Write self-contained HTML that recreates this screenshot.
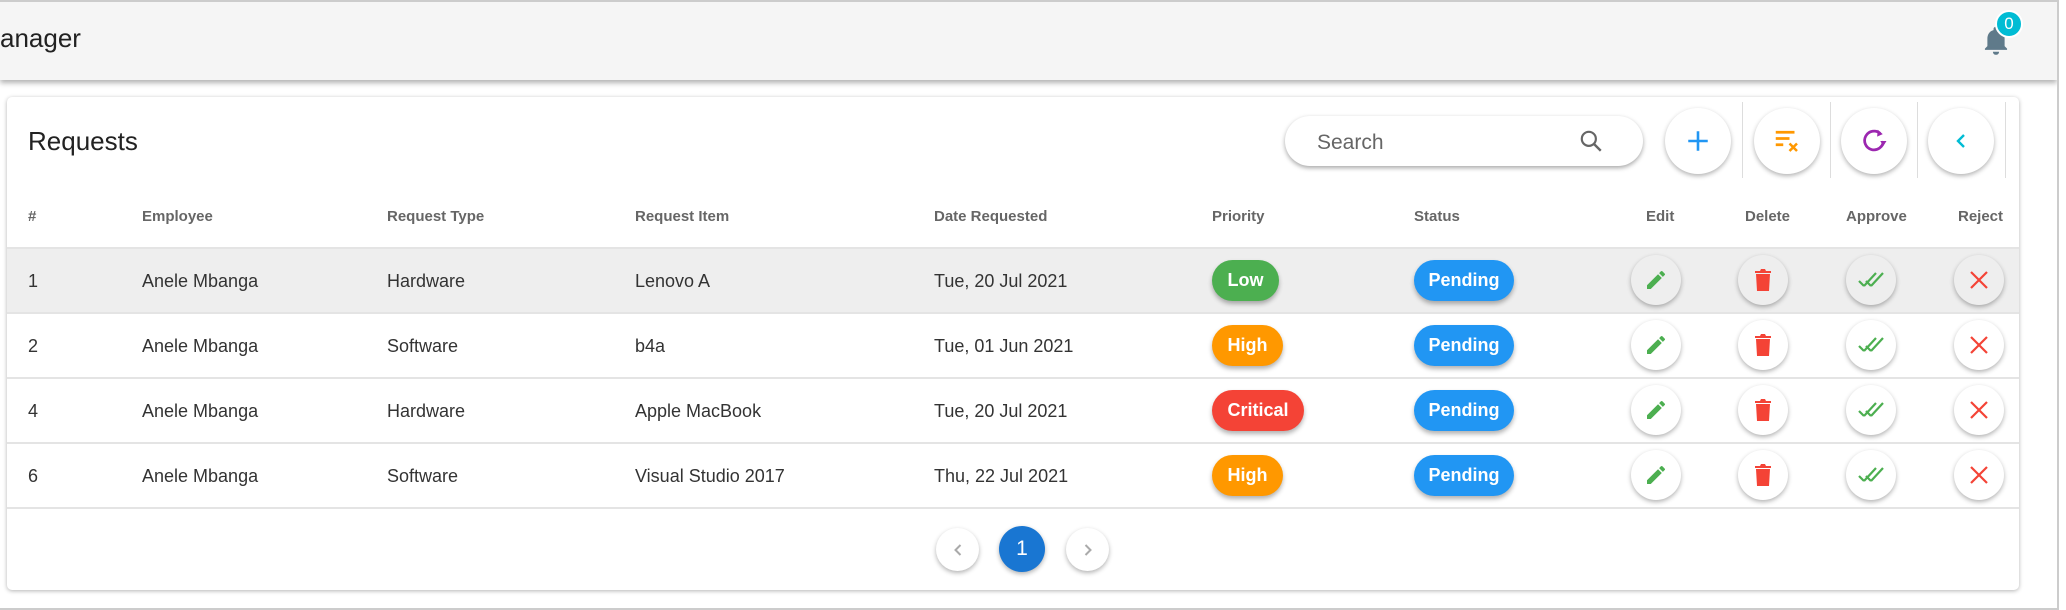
<!DOCTYPE html>
<html><head><meta charset="utf-8"><style>
*{box-sizing:border-box;margin:0;padding:0}
body{width:2066px;height:610px;overflow:hidden;background:#fff;font-family:"Liberation Sans",sans-serif;position:relative;color:#333}
.abs{position:absolute}
.hdr{left:0;top:0;width:2057px;height:80px;background:#f5f5f5;border-top:2px solid #ccc;box-shadow:0 3px 5px rgba(0,0,0,.3)}
.card{left:7px;top:97px;width:2012px;height:493px;background:#fff;border-radius:5px;box-shadow:0 1px 4px rgba(0,0,0,.3)}
.th{top:208px;font-size:15px;font-weight:bold;color:#666}
.td{font-size:18px;color:#333}
.line{left:7px;width:2012px;height:2px;background:#e4e4e4}
.pill{height:41px;border-radius:21px;color:#fff;font-size:18px;font-weight:bold;display:flex;align-items:center;justify-content:center;box-shadow:0 3px 5px rgba(0,0,0,.3)}
.circ{border-radius:50%;background:#fff;box-shadow:0 2px 5px rgba(0,0,0,.3);display:flex;align-items:center;justify-content:center}
.ac{width:50px;height:50px}
.tb{width:66px;height:66px;top:108px}
.div{width:1px;background:#ddd;top:102px;height:76px}
</style></head><body>
<div class="abs hdr"></div>
<div class="abs" style="left:0;top:23px;font-size:26px;color:#222">anager</div>
<svg class="abs" style="left:1981px;top:24px" width="30" height="32" viewBox="0 0 24 26"><path d="M12 25c1.4 0 2.5-1 2.5-2.5h-5C9.5 24 10.6 25 12 25zM19 18v-6c0-3.4-1.8-6.2-5-7V4c0-1-.9-1.8-2-1.8S10 3 10 4v1c-3.2.8-5 3.6-5 7v6l-2 2v1h18v-1z" fill="#5f7a8a"/></svg>
<div class="abs" style="left:1995px;top:10px;width:28px;height:28px;border-radius:50%;background:#00bcd4;border:2px solid #fff;color:#fff;font-size:17px;display:flex;align-items:center;justify-content:center">0</div>
<div class="abs" style="left:2057px;top:0;width:9px;height:610px;background:#fff;border-left:2px solid #ccc"></div>
<div class="abs" style="left:0;top:608px;width:2057px;height:2px;background:#ccc"></div>

<div class="abs card"></div>
<div class="abs" style="left:28px;top:126px;font-size:26px;color:#222">Requests</div>
<div class="abs" style="left:1285px;top:116px;width:358px;height:50px;border-radius:25px;background:#fff;box-shadow:0 2px 5px rgba(0,0,0,.35)"></div>
<div class="abs" style="left:1317px;top:131px;font-size:21px;color:#666">Search</div>
<svg class="abs" style="left:1578px;top:128px" width="26" height="26" viewBox="0 0 24 24"><circle cx="10" cy="10" r="6.5" fill="none" stroke="#666" stroke-width="2"/><path d="M15 15l6 6" stroke="#666" stroke-width="2.2"/></svg>
<div class="abs div" style="left:1742px"></div><div class="abs div" style="left:1830px"></div><div class="abs div" style="left:1917px"></div><div class="abs div" style="left:2005px"></div>
<div class="abs circ tb" style="left:1665px"><svg width="26" height="26" viewBox="0 0 24 24"><path d="M12 3v18M3 12h18" stroke="#2196f3" stroke-width="2.4"/></svg></div>
<div class="abs circ tb" style="left:1754px"><svg width="30" height="30" viewBox="0 0 24 24"><path d="M3 5h15M3 10h11M3 15h6" stroke="#ff9800" stroke-width="2.2"/><path d="M14 14l6 6M20 14l-6 6" stroke="#ff9800" stroke-width="2"/></svg></div>
<div class="abs circ tb" style="left:1841px"><svg width="30" height="30" viewBox="0 0 24 24"><path d="M17 6A7.5 7.5 0 1 0 19.5 12" fill="none" stroke="#9c27b0" stroke-width="2.2"/><path d="M15 3l4 3.5-4.5 2z M17 12l5 0-2.5 4z" fill="#9c27b0"/></svg></div>
<div class="abs circ tb" style="left:1928px"><svg width="24" height="24" viewBox="0 0 24 24"><path d="M15 6l-6 6 6 6" fill="none" stroke="#00bcd4" stroke-width="2.4"/></svg></div>

<div class="abs th" style="left:28px">#</div>
<div class="abs th" style="left:142px">Employee</div>
<div class="abs th" style="left:387px">Request Type</div>
<div class="abs th" style="left:635px">Request Item</div>
<div class="abs th" style="left:934px">Date Requested</div>
<div class="abs th" style="left:1212px">Priority</div>
<div class="abs th" style="left:1414px">Status</div>
<div class="abs th" style="left:1646px">Edit</div>
<div class="abs th" style="left:1745px">Delete</div>
<div class="abs th" style="left:1846px">Approve</div>
<div class="abs th" style="left:1958px">Reject</div>

<div class="abs" style="left:7px;top:248px;width:2012px;height:64px;background:#eee"></div>
<div class="abs line" style="top:247px"></div>
<div class="abs line" style="top:312px"></div>
<div class="abs line" style="top:377px"></div>
<div class="abs line" style="top:442px"></div>
<div class="abs line" style="top:507px"></div>

<div id="rows"></div>
<script>
var rows=[["1","Hardware","Lenovo A","Tue, 20 Jul 2021","Low","#4caf50",67],["2","Software","b4a","Tue, 01 Jun 2021","High","#ff9800",71],["4","Hardware","Apple MacBook","Tue, 20 Jul 2021","Critical","#f44336",92],["6","Software","Visual Studio 2017","Thu, 22 Jul 2021","High","#ff9800",71]];
var h="";
var pen='<svg width="24" height="24" viewBox="0 0 24 24"><path d="M3 17.25V21h3.75L17.8 9.94l-3.75-3.75zM20.7 7.04a1 1 0 0 0 0-1.41l-2.34-2.34a1 1 0 0 0-1.41 0l-1.83 1.83 3.75 3.75z" fill="#4caf50"/></svg>';
var del='<svg width="24" height="26" viewBox="0 0 24 26"><path d="M5 7h14l-1 17H6zM4 4h5l1-2h4l1 2h5v2H4z" fill="#f44336"/></svg>';
var chk='<svg width="28" height="24" viewBox="0 0 28 24"><path d="M2 13l5 5M7 18L19 5M9 13l5 5M14 18L26 5" fill="none" stroke="#4caf50" stroke-width="2.2"/></svg>';
var x='<svg width="24" height="24" viewBox="0 0 24 24"><path d="M4 4l16 16M20 4L4 20" stroke="#f44336" stroke-width="2.2"/></svg>';
rows.forEach(function(r,i){var c=280+i*65;var t=c-9;
h+='<div class="abs td" style="left:28px;top:'+t+'px">'+r[0]+'</div>';
h+='<div class="abs td" style="left:142px;top:'+t+'px">Anele Mbanga</div>';
h+='<div class="abs td" style="left:387px;top:'+t+'px">'+r[1]+'</div>';
h+='<div class="abs td" style="left:635px;top:'+t+'px">'+r[2]+'</div>';
h+='<div class="abs td" style="left:934px;top:'+t+'px">'+r[3]+'</div>';
h+='<div class="abs pill" style="left:1212px;top:'+(c-20)+'px;width:'+r[6]+'px;background:'+r[5]+'">'+r[4]+'</div>';
h+='<div class="abs pill" style="left:1414px;top:'+(c-20)+'px;width:100px;background:#2196f3">Pending</div>';
var xs=[1656,1763,1871,1979],ic=[pen,del,chk,x];
for(var k=0;k<4;k++){h+='<div class="abs circ ac" style="left:'+(xs[k]-25)+'px;top:'+(c-25)+'px;'+(i==0?'background:#eee':'')+'">'+ic[k]+'</div>';}
});
document.getElementById("rows").innerHTML=h;
</script>

<div class="abs circ" style="left:936px;top:528px;width:43px;height:43px"><svg width="20" height="20" viewBox="0 0 24 24"><path d="M15 6l-6 6 6 6" fill="none" stroke="#aaa" stroke-width="2.4"/></svg></div>
<div class="abs circ" style="left:999px;top:526px;width:46px;height:46px;background:#1976d2;color:#fff;font-size:21px">1</div>
<div class="abs circ" style="left:1066px;top:528px;width:43px;height:43px"><svg width="20" height="20" viewBox="0 0 24 24"><path d="M9 6l6 6-6 6" fill="none" stroke="#aaa" stroke-width="2.4"/></svg></div>
</body></html>
